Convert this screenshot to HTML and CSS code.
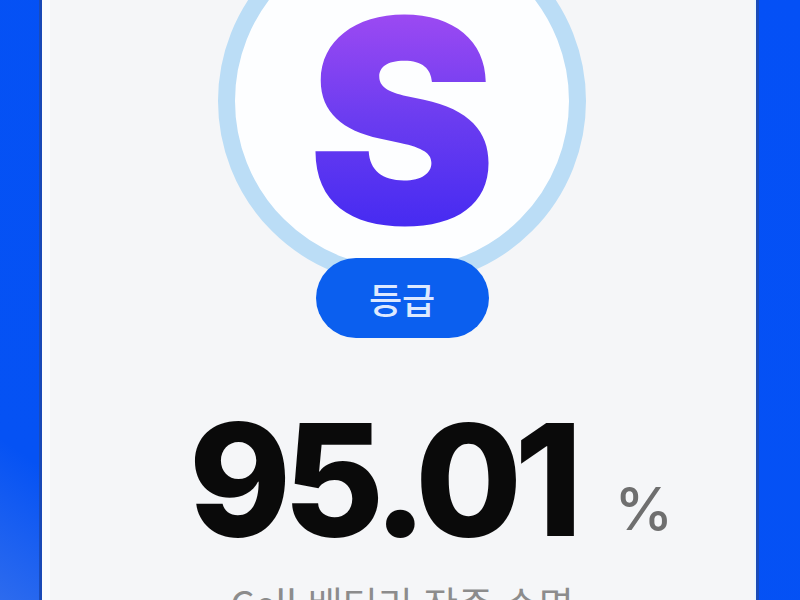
FILE: index.html
```html
<!DOCTYPE html>
<html lang="ko">

<head>
  <meta charset="UTF-8">
  <meta name="viewport" content="width=device-width, initial-scale=1.0">
  <link rel="stylesheet" href="styles.css">
</head>

<body>
  <div class="card">
    <div class="grade-ring">
      <span class="grade-letter">S</span>
    </div>
    <div class="grade-badge">등급</div>

    <div class="score-row">
      <span class="score-value">95.01</span>
      <span class="score-unit">%</span>
    </div>
    <p class="score-label">Cell 배터리 잔존 수명</p>
  </div>
</body>

</html>
```

FILE: styles.css
```css
/* Fondo */
html,
body {
  margin: 0;
  height: 100%;
  overflow: hidden;
}

body {
  background: linear-gradient(215deg, #0450f6 0%, #0552f4 86%, #2d6bee 100%);
  font-family: "Noto Sans CJK KR", "Noto Sans", sans-serif;
}

/* Tarjeta */
.card {
  margin: 0 44px 0 42px;
  height: 100%;
  background-color: #f5f6f8;
  border-left: 8px solid #fbfdff;
  border-right: 2px solid #eaf6ff;
  box-shadow: -3px 0 0 #1a4bb8, 3px 0 0 #1a4bb8;
  display: flex;
  flex-direction: column;
  align-items: center;
  box-sizing: border-box;
}

/* Circulo del grado */
.grade-ring {
  width: 368px;
  height: 368px;
  margin-top: -83px;
  border: 17px solid #bbddf6;
  border-radius: 50%;
  background-color: #fdfeff;
  box-sizing: border-box;
  display: flex;
  align-items: center;
  justify-content: center;
  padding-top: 40px;
  flex-shrink: 0;
}

.grade-letter {
  font-family: Inter, "Liberation Sans", sans-serif;
  font-weight: 900;
  font-size: 284px;
  line-height: 1;
  background: linear-gradient(180deg, #ac4ef3 0%, #6a3cf0 50%, #3a25f2 100%);
  -webkit-background-clip: text;
  background-clip: text;
  color: transparent;
}

.grade-badge {
  margin-top: -27px;
  width: 173px;
  height: 80px;
  border-radius: 40px;
  background-color: #0b5fef;
  color: #dde9ff;
  font-size: 36px;
  font-weight: 500;
  display: flex;
  align-items: center;
  justify-content: center;
  flex-shrink: 0;
}

/* Valor */
.score-row {
  margin-top: 64px;
  padding-left: 58px;
  display: flex;
  align-items: baseline;
  gap: 40px;
  font-family: Inter, "Liberation Sans", sans-serif;
}

.score-value {
  font-size: 155px;
  font-weight: 800;
  line-height: 1;
  color: #0a0a0a;
  letter-spacing: -8px;
}

.score-unit {
  font-size: 59px;
  font-weight: 500;
  color: #6f6f6f;
  position: relative;
  top: -6px;
}

.score-label {
  margin: 18px 0 0;
  font-size: 38px;
  color: #8c8c8c;
  white-space: nowrap;
}
```
